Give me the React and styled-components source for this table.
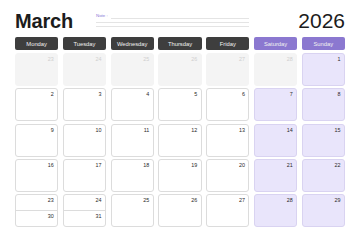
import styled, { createGlobalStyle } from 'styled-components'

const GlobalStyle = createGlobalStyle`
    html, body { margin: 0; padding: 0; background: #ffffff; }
    body { font-family: "Liberation Sans", Arial, sans-serif; }
`;

const Page = styled.div`
    width: 360px; height: 240px;
    box-sizing: border-box;
    padding: 10px 15px 0 15px;
    background: #ffffff;
    overflow: hidden;
`;

const Top = styled.div`
    display: flex; flex-flow: row nowrap;
    align-items: baseline;
    height: 21px;
    margin-bottom: 6px;
`;
const Month = styled.div`
    width: 81px;
    font-size: 20px; line-height: 20px;
    font-weight: 700; color: #1c1c1c;
    letter-spacing: -0.2px;
`;
const Year = styled.div`
    margin-left: auto;
    font-size: 21px; line-height: 21px;
    color: #1c1c1c;
`;

const NoteBlock = styled.div`
    align-self: flex-start;
    width: 153px;
    padding-top: 3.5px;
    display: flex; flex-direction: column;
`;
const NoteRow = styled.div`
    display: flex; align-items: flex-end;
    height: 4.6px;
    box-sizing: border-box;
    border-bottom: ${({$plain}) => $plain ? 'none' : '1px solid #e4e4e4'};
`;
const NoteLabel = styled.span`
    font-size: 4.4px; line-height: 5px;
    color: #8a78d6;
    margin-right: 3px;
    white-space: nowrap;
`;
const NoteLine = styled.span`
    flex: 1;
    height: 1px;
    background: #e4e4e4;
    margin-bottom: -1px;
`;

const Week = styled.div`
    display: grid;
    grid-template-columns: repeat(7, 1fr);
    column-gap: 4.5px;
    height: 13px;
    margin-bottom: 3px;
`;
const DayName = styled.div`
    display: flex; align-items: center; justify-content: center;
    border-radius: 2px;
    background: ${({$weekend}) => $weekend ? '#8b78d0' : '#3e3e3e'};
    color: #f2f2f2;
    font-size: 5.8px;
`;

const Grid = styled.div`
    display: grid;
    grid-template-columns: repeat(7, 1fr);
    grid-auto-rows: 33px;
    column-gap: 4.5px;
    row-gap: 2.25px;
`;

const cellBg = {
    prev: '#f4f4f4',
    day: '#ffffff',
    weekend: '#e9e5fb',
};
const cellBorder = {
    prev: '#f4f4f4',
    day: '#dcdcdc',
    weekend: '#d9d3f1',
};

const Cell = styled.div`
    box-sizing: border-box;
    display: flex; flex-direction: column;
    border-radius: 3px;
    background: ${({$kind}) => cellBg[$kind]};
    border: 1px solid ${({$kind}) => cellBorder[$kind]};
    overflow: hidden;
`;
const Half = styled.div`
    flex: 1;
    display: flex; justify-content: flex-end;
    & + & { border-top: 1px solid #dcdcdc; }
`;
const Num = styled.span`
    display: block;
    margin-left: auto;
    padding: 2px 3.5px 0 0;
    font-size: 5.4px; line-height: 6px;
    color: ${({$muted}) => $muted ? '#cfcfcf' : '#2a2a2a'};
`;

const days = ['Monday', 'Tuesday', 'Wednesday', 'Thursday', 'Friday', 'Saturday', 'Sunday'];

// February tail, then March 1..29, with 30 and 31 folded under 23 and 24
const cells = [
    ...[23, 24, 25, 26, 27, 28].map(n => ({ n, kind: 'prev' })),
    ...Array.from({ length: 29 }, (_, i) => i + 1).map((n, i) => {
        const col = (i + 6) % 7;
        return { n, kind: col >= 5 ? 'weekend' : 'day', extra: n === 23 ? 30 : n === 24 ? 31 : null };
    }),
];

const App = () => {
    return (
        <Page>
            <GlobalStyle />
            <Top>
                <Month>March</Month>
                <NoteBlock>
                    <NoteRow $plain>
                        <NoteLabel>Note :</NoteLabel>
                        <NoteLine />
                    </NoteRow>
                    <NoteRow />
                    <NoteRow />
                </NoteBlock>
                <Year>2026</Year>
            </Top>
            <Week>
                {days.map((d, i) => <DayName key={d} $weekend={i >= 5}>{d}</DayName>)}
            </Week>
            <Grid>
                {cells.map(c => (
                    <Cell key={c.kind + c.n} $kind={c.kind}>
                        {c.extra ? (
                            <>
                                <Half><Num>{c.n}</Num></Half>
                                <Half><Num>{c.extra}</Num></Half>
                            </>
                        ) : (
                            <Num $muted={c.kind === 'prev'}>{c.n}</Num>
                        )}
                    </Cell>
                ))}
            </Grid>
        </Page>
    )
}

export default App
